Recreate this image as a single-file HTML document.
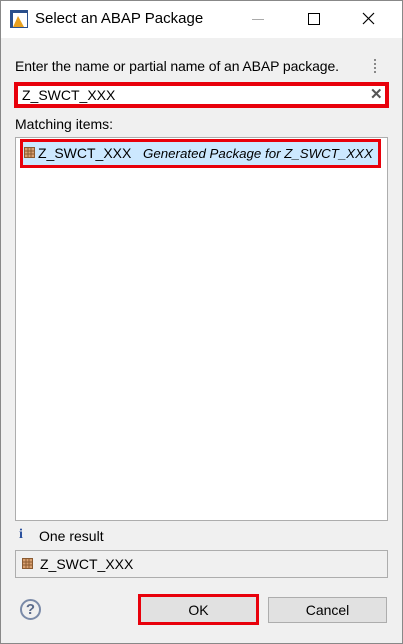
<!DOCTYPE html><html><head><style>
body{margin:0;width:403px;height:644px;background:#f0f0f0;font-family:"Liberation Sans",sans-serif;font-size:14px;color:#000;position:relative;overflow:hidden}
.a{position:absolute}
</style></head><body>
<div class="a" style="left:0;top:0;width:401px;height:642px;border:1px solid #888"></div>
<div class="a" style="left:1px;top:1px;width:401px;height:37px;background:#fff"></div>
<svg class="a" style="left:10px;top:10px" width="18" height="18"><rect x="0" y="0" width="18" height="18" fill="#2a4f8c"/><rect x="3" y="3" width="14" height="14" fill="#fff"/><polygon points="8,6 14,17 3,17" fill="#e8a020"/></svg>
<div class="a" style="left:35px;top:10px;font-size:15px">Select an ABAP Package</div>
<div class="a" style="left:252px;top:19px;width:12px;height:1px;background:#aaa"></div>
<div class="a" style="left:308px;top:13px;width:10px;height:10px;border:1px solid #000"></div>
<svg class="a" style="left:362px;top:12px" width="13" height="13"><path d="M1 1L12 12M12 1L1 12" stroke="#000" stroke-width="1.2"/></svg>
<div class="a" style="left:15px;top:58px;letter-spacing:-0.1px">Enter the name or partial name of an ABAP package.</div>
<div class="a" style="left:374px;top:59px;width:3px;height:14px;border-left:2px dotted #888"></div>
<div class="a" style="left:14px;top:82px;width:367px;height:18px;background:#fff;border:4px solid #e8000b"></div>
<div class="a" style="left:22px;top:87px">Z_SWCT_XXX</div>
<div class="a" style="left:370px;top:85px;font-size:15px;color:#555;font-weight:bold">✕</div>
<div class="a" style="left:15px;top:116px">Matching items:</div>
<div class="a" style="left:15px;top:137px;width:371px;height:382px;background:#fff;border:1px solid #adadad"></div>
<div class="a" style="left:20px;top:139px;width:355px;height:23px;background:#cce8ff;border:3px solid #e8000b"></div>
<svg class="a" style="left:24px;top:147px" width="11" height="11"><rect x="0.5" y="0.5" width="10" height="10" fill="#d9a070" stroke="#8a5a30"/><path d="M0 4H11M0 7H11M4 0V11M7 0V11" stroke="#8a5a30"/></svg>
<div class="a" style="left:38px;top:145px;white-space:nowrap">Z_SWCT_XXX &nbsp;&nbsp;<i style="font-size:13.3px">Generated Package for Z_SWCT_XXX</i></div>
<div class="a" style="left:19px;top:527px;color:#2a4f9c;font-weight:bold;font-family:'Liberation Serif',serif">i</div>
<div class="a" style="left:39px;top:528px">One result</div>
<div class="a" style="left:15px;top:550px;width:371px;height:26px;border:1px solid #adadad"></div>
<svg class="a" style="left:22px;top:558px" width="11" height="11"><rect x="0.5" y="0.5" width="10" height="10" fill="#d9a070" stroke="#8a5a30"/><path d="M0 4H11M0 7H11M4 0V11M7 0V11" stroke="#8a5a30"/></svg>
<div class="a" style="left:40px;top:556px">Z_SWCT_XXX</div>
<div class="a" style="left:20px;top:599px;width:17px;height:17px;border:2px solid #7a8aa8;border-radius:50%;text-align:center;font-size:15px;line-height:17px;color:#5a6a8a;font-weight:bold">?</div>
<div class="a" style="left:138px;top:594px;width:115px;height:25px;background:#e1e1e1;border:3px solid #e8000b;text-align:center;line-height:27px">OK</div>
<div class="a" style="left:268px;top:597px;width:117px;height:24px;background:#e1e1e1;border:1px solid #adadad;text-align:center;line-height:25px">Cancel</div>
</body></html>
